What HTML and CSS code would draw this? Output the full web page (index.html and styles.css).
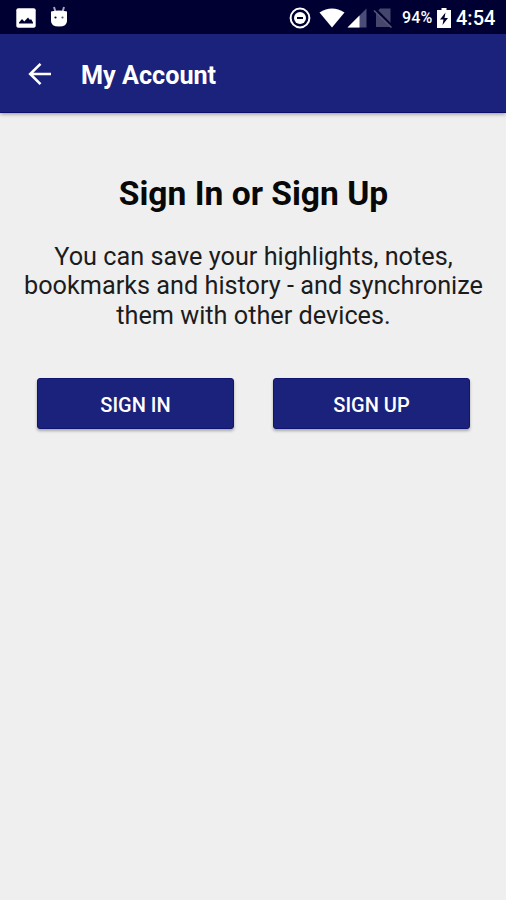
FILE: index.html
```html
<!DOCTYPE html>
<html>
  <head>
    <title>My Account</title>
    <meta charset="UTF-8">
    <meta name="viewport" content="width=device-width, initial-scale=1.0">
    <link rel="stylesheet" href="styles.css">
  </head>
  <body>
    <div class="statusbar">
      <svg class="picture" width="20" height="20" viewBox="0 0 20 20">
        <rect x="0.3" y="0.3" width="19.4" height="19.4" rx="2" fill="#fff"/>
        <path d="M3 15.5v-1l3-3.5 2.3 2.5 3.7-4 2 2.5 1-1 2 3.5v1z" fill="#000033"/>
      </svg>
      <svg class="robot" width="20" height="22" viewBox="0 0 20 22">
        <path d="M5 1l1.5 5M15 1l-1.5 5" stroke="#a5a5bd" stroke-width="2"/>
        <path d="M2 5.5Q10 3.5 18 5.5V15q0 5.5-8 5.5T2 15z" fill="#fff"/>
        <circle cx="6.5" cy="11.5" r="1.1" fill="#000033"/>
        <circle cx="13.5" cy="11.5" r="1.1" fill="#55557a"/>
      </svg>
      <svg class="dnd" width="22" height="22" viewBox="0 0 22 22">
        <circle cx="11" cy="11" r="9.4" fill="none" stroke="#fff" stroke-width="2"/>
        <circle cx="11" cy="11" r="6" fill="#fff"/>
        <path d="M8 11h6" stroke="#000033" stroke-width="2"/>
      </svg>
      <svg class="wifi" width="26" height="20" viewBox="0 0 26 20">
        <path d="M0.5 4.5Q13-3.5 25.5 4.5L13 19.5z" fill="#fff"/>
      </svg>
      <svg class="signal" width="20" height="20" viewBox="0 0 20 20">
        <path d="M19.5 0.5v19H0.5z" fill="#4c4c78"/>
        <path d="M12.5 7.5v12H0.5z" fill="#fff"/>
      </svg>
      <svg class="nosim" width="20" height="20" viewBox="0 0 20 20">
        <path d="M7 0.5h10.5v18.5H3V5z" fill="#46466d"/>
        <path d="M2.5 1.5l17 17" stroke="#000033" stroke-width="2.6"/>
        <path d="M1 2.5l17.5 17" stroke="#55557a" stroke-width="1.6"/>
      </svg>
      <span class="percent">94%</span>
      <svg class="battery" width="14" height="20" viewBox="0 0 14 20">
        <path d="M4.5 0h5v2H14v18H0V2h4.5z" fill="#fff"/>
        <path d="M8.5 4.5L3 11.5h3.5L5.5 17l5.5-7H7.5z" fill="#000033"/>
      </svg>
      <span class="clock">4:54</span>
    </div>

    <div class="navbar">
      <svg class="back" width="24" height="24" viewBox="0 0 24 24">
        <path d="M23 12H2M12.5 1.8L2.2 12l10.3 10.2" fill="none" stroke="#fff" stroke-width="2.6"/>
      </svg>
      <span class="title">My Account</span>
    </div>

    <div id="content">
      <h1>Sign In or Sign Up</h1>
      <p>You can save your highlights, notes,<br>
        bookmarks and history - and synchronize<br>
        them with other devices.</p>
      <div class="buttons">
        <button id="signInBtn">SIGN IN</button>
        <button id="signUpBtn">SIGN UP</button>
      </div>
    </div>
  </body>
</html>
```
FILE: styles.css
```css
* {
  box-sizing: border-box;
}
body,html{
  height:100%;
}
body {
  font-family: Roboto, Arial, sans-serif;
  margin: 0;
  background:#efefef;
  overflow:hidden;
}
svg{
  display:block;
  flex:none;
}
/* Phone status bar */
.statusbar{
  display:flex;
  align-items:center;
  height:34px;
  padding:1px 0 0 16px;
  background:#000033;
  color:white;
  white-space:nowrap;
}
.robot{
  margin:-2px 0 0 13px;
}
.dnd{
  margin-left:220px;
}
.wifi{
  margin-left:8px;
}
.signal{
  margin-left:2px;
}
.nosim{
  margin-left:6px;
}
.percent{
  width:32px;
  margin-left:9px;
  font-size:16px;
  font-weight:500;
  letter-spacing:0.2px;
}
.battery{
  margin-left:3px;
}
.clock{
  margin-left:5px;
  font-size:20px;
  font-weight:500;
}
/* Title bar */
.navbar{
  display:flex;
  align-items:center;
  height:79px;
  padding:1px 0 0 28px;
  background:#1b227c;
  color:white;
  border-bottom:1px solid #0b0f68;
  box-shadow:0 1px 4px rgba(0,0,0,0.4);
}
.title{
  margin-left:29px;
  padding-top:3px;
  font-size:25.2px;
  font-weight:bold;
}
#content{
  padding:61px 0 0 1px;
  text-align:center;
}
h1{
  margin:0;
  font-size:33.6px;
  line-height:40px;
  font-weight:bold;
  color:#080808;
}
p{
  margin:27.5px 0 0;
  font-size:25.25px;
  line-height:29.5px;
  color:#1c1c1c;
  white-space:nowrap;
}
.buttons{
  display:flex;
  justify-content:center;
  gap:39px;
  margin-top:47.5px;
}
button{
  width:197px;
  height:51px;
  padding:3px 0 0;
  border:1px solid #0e1470;
  border-radius:3px;
  background:#1b227c;
  color:white;
  font-family:inherit;
  font-size:20px;
  font-weight:500;
  box-shadow:0 2px 3px rgba(0,0,0,0.3);
}
```
